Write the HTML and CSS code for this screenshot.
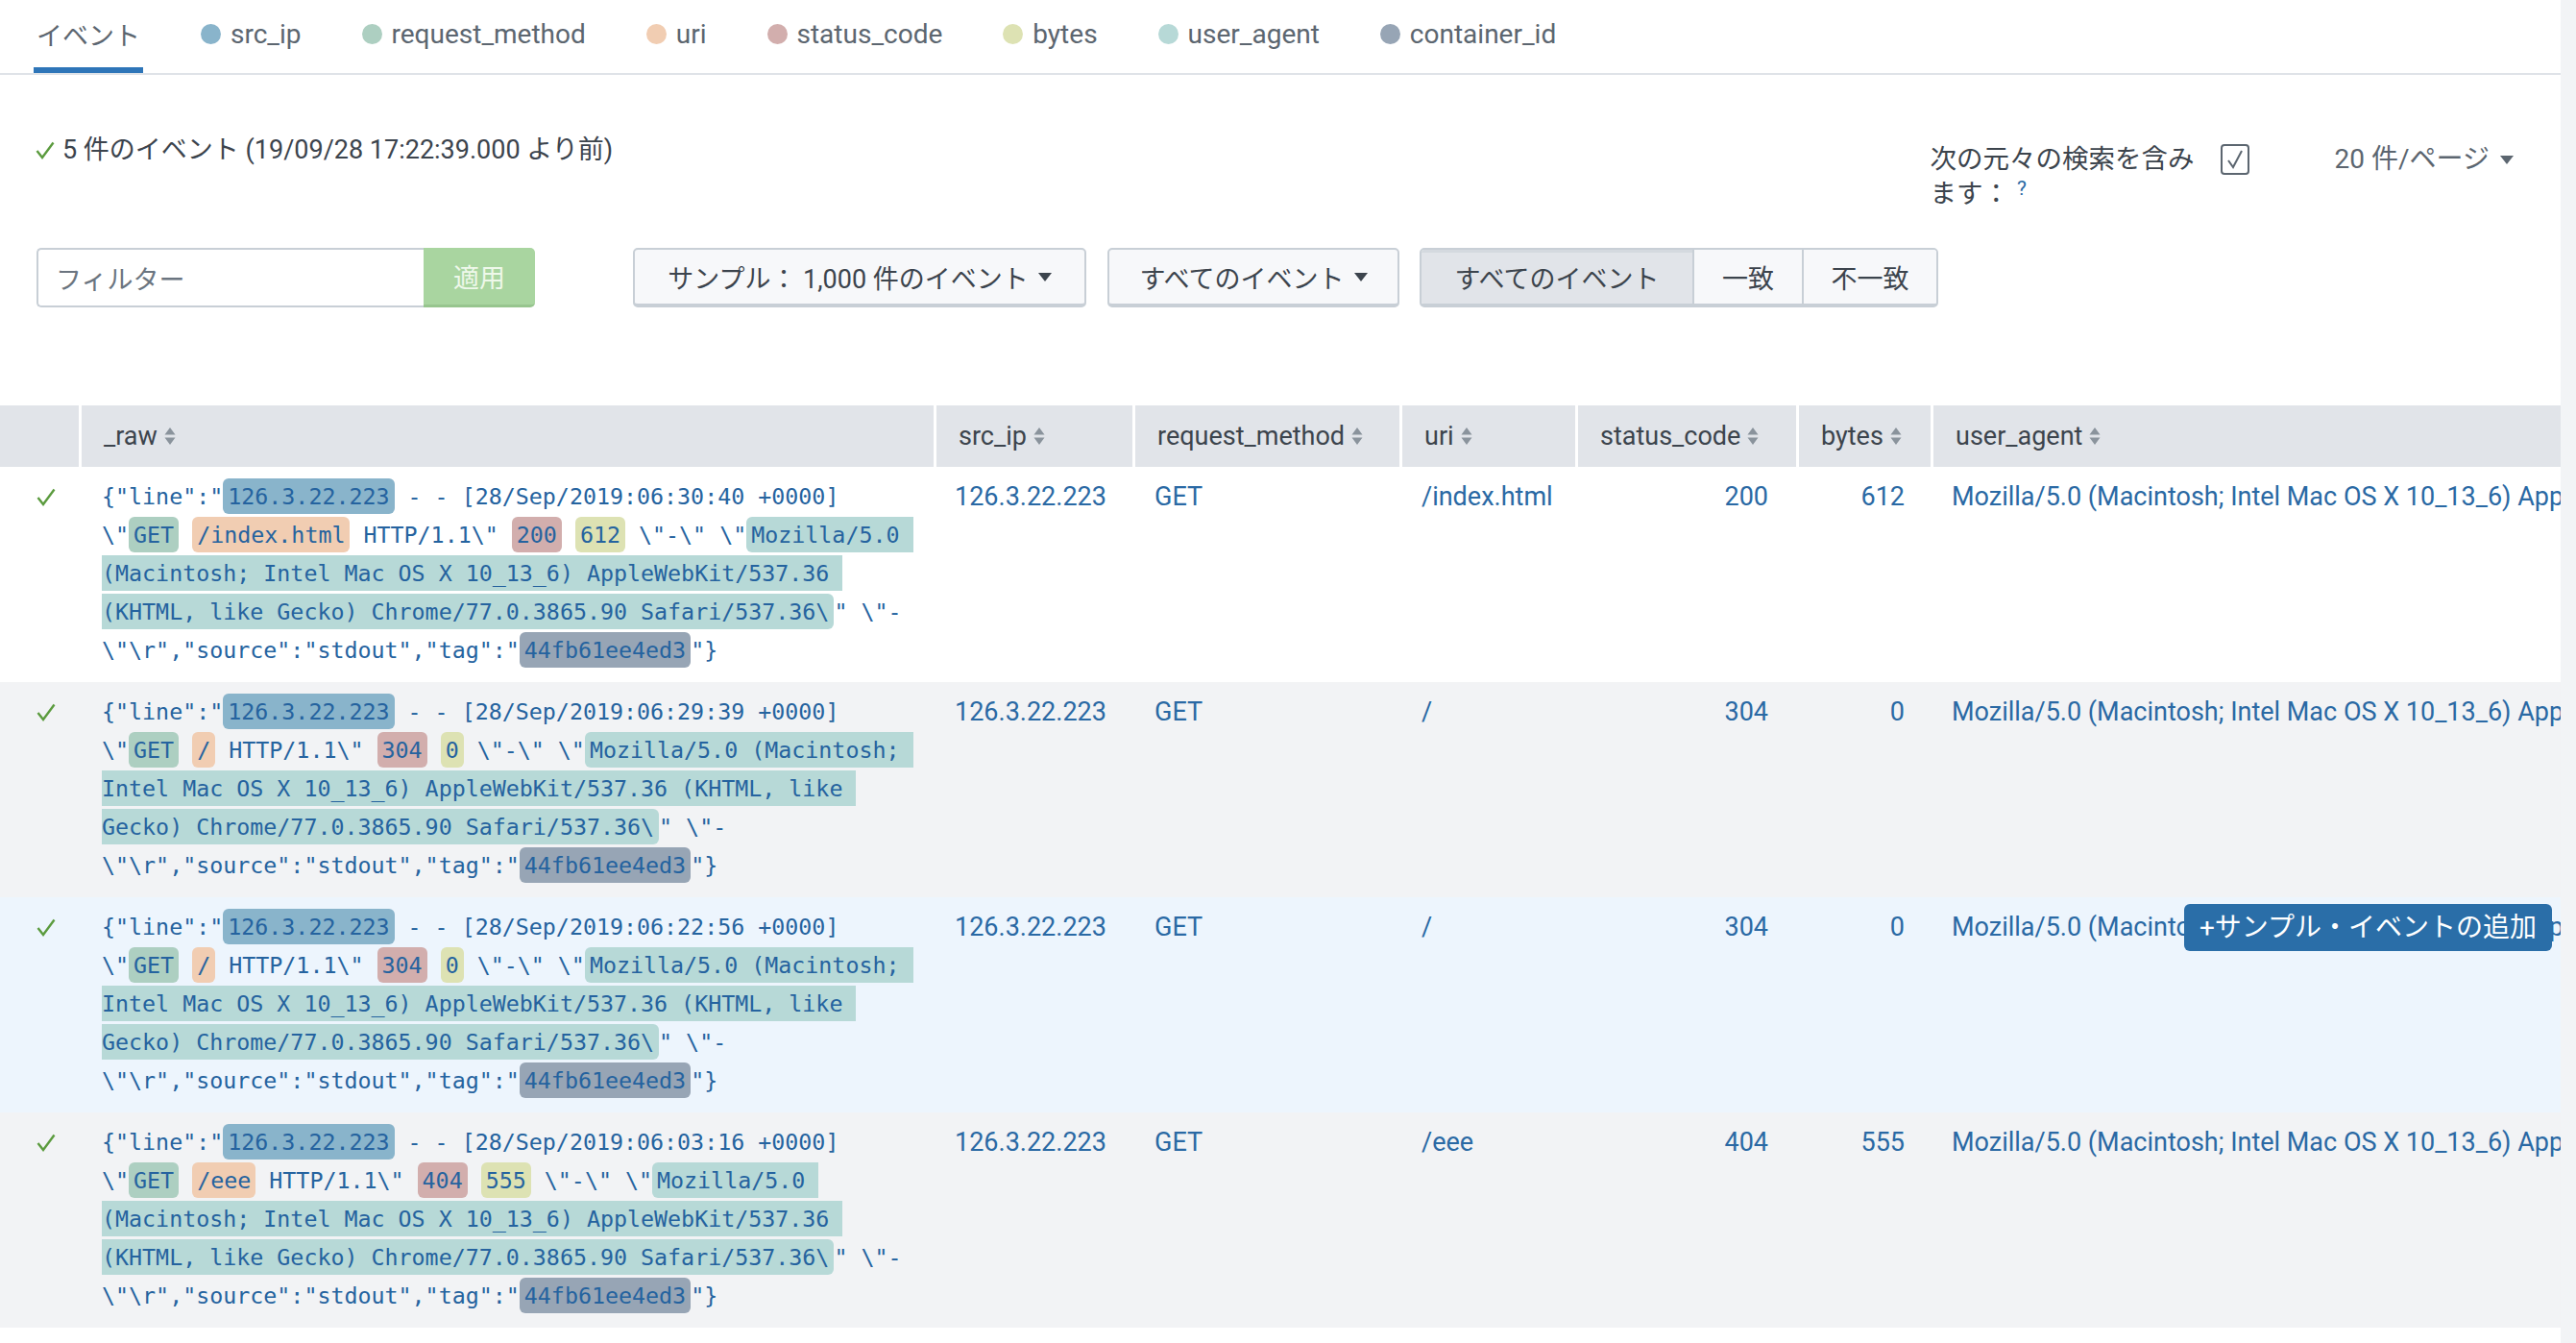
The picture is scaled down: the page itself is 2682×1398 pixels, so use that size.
FILE: index.html
```html
<!DOCTYPE html>
<html lang="ja">
<head>
<meta charset="utf-8">
<title>イベント</title>
<link rel="stylesheet" href="styles.css">
</head>
<body>
<div class="page">
  <nav class="tabs">
    <div class="tab active">イベント</div>
    <div class="tab"><span class="dot c-ip"></span>src_ip</div>
    <div class="tab"><span class="dot c-rm"></span>request_method</div>
    <div class="tab"><span class="dot c-uri"></span>uri</div>
    <div class="tab"><span class="dot c-sc"></span>status_code</div>
    <div class="tab"><span class="dot c-by"></span>bytes</div>
    <div class="tab"><span class="dot c-ua"></span>user_agent</div>
    <div class="tab"><span class="dot c-ci"></span>container_id</div>
  </nav>

  <div class="summary-row">
    <div class="summary">
      <svg class="ok" viewBox="0 0 20 19" width="20" height="19"><polyline points="1.5,10 7,17 18.5,1.5" fill="none" stroke="#5b9b3e" stroke-width="2.4"/></svg>
      <span>5 件のイベント (19/09/28 17:22:39.000 より前)</span>
    </div>
    <div class="options">
      <div class="include">
        <div class="include-label">次の元々の検索を含みます：<span class="help">?</span></div>
        <span class="checkbox"><svg viewBox="0 0 26 28" width="26" height="28"><polyline points="6,15 11,22 20,5" fill="none" stroke="#5c6670" stroke-width="2"/></svg></span>
      </div>
      <div class="perpage">20 件/ページ<svg class="caret" viewBox="0 0 14 9" width="14" height="9"><path d="M0 0H14L7 9Z" fill="#5c6670"/></svg></div>
    </div>
  </div>

  <div class="filter-row">
    <div class="filter-input">フィルター</div>
    <div class="apply">適用</div>
    <div class="btn btn-sample">サンプル： 1,000 件のイベント<svg class="caret" viewBox="0 0 14 9" width="14" height="9"><path d="M0 0H14L7 9Z" fill="#3c444d"/></svg></div>
    <div class="btn btn-all">すべてのイベント<svg class="caret" viewBox="0 0 14 9" width="14" height="9"><path d="M0 0H14L7 9Z" fill="#3c444d"/></svg></div>
    <div class="seg-group">
      <div class="seg seg-all active">すべてのイベント</div>
      <div class="seg seg-match">一致</div>
      <div class="seg seg-nomatch">不一致</div>
    </div>
  </div>

  <div class="table">
    <div class="thead">
      <div class="th"></div>
      <div class="th">_raw<svg class="sort" viewBox="0 0 12 20" width="12" height="20"><path d="M6 1L11.5 8.5H0.5Z M6 19L11.5 11.5H0.5Z" fill="#8a939c"/></svg></div>
      <div class="th">src_ip<svg class="sort" viewBox="0 0 12 20" width="12" height="20"><path d="M6 1L11.5 8.5H0.5Z M6 19L11.5 11.5H0.5Z" fill="#8a939c"/></svg></div>
      <div class="th">request_method<svg class="sort" viewBox="0 0 12 20" width="12" height="20"><path d="M6 1L11.5 8.5H0.5Z M6 19L11.5 11.5H0.5Z" fill="#8a939c"/></svg></div>
      <div class="th">uri<svg class="sort" viewBox="0 0 12 20" width="12" height="20"><path d="M6 1L11.5 8.5H0.5Z M6 19L11.5 11.5H0.5Z" fill="#8a939c"/></svg></div>
      <div class="th">status_code<svg class="sort" viewBox="0 0 12 20" width="12" height="20"><path d="M6 1L11.5 8.5H0.5Z M6 19L11.5 11.5H0.5Z" fill="#8a939c"/></svg></div>
      <div class="th">bytes<svg class="sort" viewBox="0 0 12 20" width="12" height="20"><path d="M6 1L11.5 8.5H0.5Z M6 19L11.5 11.5H0.5Z" fill="#8a939c"/></svg></div>
      <div class="th">user_agent<svg class="sort" viewBox="0 0 12 20" width="12" height="20"><path d="M6 1L11.5 8.5H0.5Z M6 19L11.5 11.5H0.5Z" fill="#8a939c"/></svg></div>
    </div>

    <div class="trow">
      <div class="td-check"><svg class="ok" viewBox="0 0 20 19" width="20" height="19"><polyline points="1.5,10 7,17 18.5,1.5" fill="none" stroke="#5b9b3e" stroke-width="2.4"/></svg></div>
      <div class="raw">{"line":"<span class="hl c-ip">126.3.22.223</span> - - [28/Sep/2019:06:30:40 +0000]<br>\"<span class="hl c-rm">GET</span> <span class="hl c-uri">/index.html</span> HTTP/1.1\" <span class="hl c-sc">200</span> <span class="hl c-by">612</span> \"-\" \"<span class="hl c-ua">Mozilla/5.0 <br>(Macintosh; Intel Mac OS X 10_13_6) AppleWebKit/537.36 <br>(KHTML, like Gecko) Chrome/77.0.3865.90 Safari/537.36\</span>" \"-<br>\"\r","source":"stdout","tag":"<span class="hl c-ci">44fb61ee4ed3</span>"}</div>
      <div class="val v-ip">126.3.22.223</div>
      <div class="val v-rm">GET</div>
      <div class="val v-uri">/index.html</div>
      <div class="val v-sc">200</div>
      <div class="val v-by">612</div>
      <div class="val v-ua">Mozilla/5.0 (Macintosh; Intel Mac OS X 10_13_6) AppleWebKit/537.36 (KHTML, like Gecko) Chrome/77.0.3865.90 Safari/537.36</div>
    </div>

    <div class="trow even">
      <div class="td-check"><svg class="ok" viewBox="0 0 20 19" width="20" height="19"><polyline points="1.5,10 7,17 18.5,1.5" fill="none" stroke="#5b9b3e" stroke-width="2.4"/></svg></div>
      <div class="raw">{"line":"<span class="hl c-ip">126.3.22.223</span> - - [28/Sep/2019:06:29:39 +0000]<br>\"<span class="hl c-rm">GET</span> <span class="hl c-uri">/</span> HTTP/1.1\" <span class="hl c-sc">304</span> <span class="hl c-by">0</span> \"-\" \"<span class="hl c-ua">Mozilla/5.0 (Macintosh; <br>Intel Mac OS X 10_13_6) AppleWebKit/537.36 (KHTML, like <br>Gecko) Chrome/77.0.3865.90 Safari/537.36\</span>" \"-<br>\"\r","source":"stdout","tag":"<span class="hl c-ci">44fb61ee4ed3</span>"}</div>
      <div class="val v-ip">126.3.22.223</div>
      <div class="val v-rm">GET</div>
      <div class="val v-uri">/</div>
      <div class="val v-sc">304</div>
      <div class="val v-by">0</div>
      <div class="val v-ua">Mozilla/5.0 (Macintosh; Intel Mac OS X 10_13_6) AppleWebKit/537.36 (KHTML, like Gecko) Chrome/77.0.3865.90 Safari/537.36</div>
    </div>

    <div class="trow hover">
      <div class="td-check"><svg class="ok" viewBox="0 0 20 19" width="20" height="19"><polyline points="1.5,10 7,17 18.5,1.5" fill="none" stroke="#5b9b3e" stroke-width="2.4"/></svg></div>
      <div class="raw">{"line":"<span class="hl c-ip">126.3.22.223</span> - - [28/Sep/2019:06:22:56 +0000]<br>\"<span class="hl c-rm">GET</span> <span class="hl c-uri">/</span> HTTP/1.1\" <span class="hl c-sc">304</span> <span class="hl c-by">0</span> \"-\" \"<span class="hl c-ua">Mozilla/5.0 (Macintosh; <br>Intel Mac OS X 10_13_6) AppleWebKit/537.36 (KHTML, like <br>Gecko) Chrome/77.0.3865.90 Safari/537.36\</span>" \"-<br>\"\r","source":"stdout","tag":"<span class="hl c-ci">44fb61ee4ed3</span>"}</div>
      <div class="val v-ip">126.3.22.223</div>
      <div class="val v-rm">GET</div>
      <div class="val v-uri">/</div>
      <div class="val v-sc">304</div>
      <div class="val v-by">0</div>
      <div class="val v-ua">Mozilla/5.0 (Macintosh; Intel Mac OS X 10_13_6) AppleWebKit/537.36 (KHTML, like Gecko) Chrome/77.0.3865.90 Safari/537.36</div>
      <div class="add-sample">+サンプル・イベントの追加</div>
    </div>

    <div class="trow even">
      <div class="td-check"><svg class="ok" viewBox="0 0 20 19" width="20" height="19"><polyline points="1.5,10 7,17 18.5,1.5" fill="none" stroke="#5b9b3e" stroke-width="2.4"/></svg></div>
      <div class="raw">{"line":"<span class="hl c-ip">126.3.22.223</span> - - [28/Sep/2019:06:03:16 +0000]<br>\"<span class="hl c-rm">GET</span> <span class="hl c-uri">/eee</span> HTTP/1.1\" <span class="hl c-sc">404</span> <span class="hl c-by">555</span> \"-\" \"<span class="hl c-ua">Mozilla/5.0 <br>(Macintosh; Intel Mac OS X 10_13_6) AppleWebKit/537.36 <br>(KHTML, like Gecko) Chrome/77.0.3865.90 Safari/537.36\</span>" \"-<br>\"\r","source":"stdout","tag":"<span class="hl c-ci">44fb61ee4ed3</span>"}</div>
      <div class="val v-ip">126.3.22.223</div>
      <div class="val v-rm">GET</div>
      <div class="val v-uri">/eee</div>
      <div class="val v-sc">404</div>
      <div class="val v-by">555</div>
      <div class="val v-ua">Mozilla/5.0 (Macintosh; Intel Mac OS X 10_13_6) AppleWebKit/537.36 (KHTML, like Gecko) Chrome/77.0.3865.90 Safari/537.36</div>
    </div>
  </div>
</div>
<div class="scrolltrack"></div>
</body>
</html>
```

FILE: styles.css
```css
* { box-sizing: border-box; }
html, body { margin: 0; padding: 0; }
body {
  display: flex;
  min-height: 100vh;
  background: #fff;
  font-family: Roboto, "Noto Sans CJK JP", sans-serif;
  font-size: 27px;
  color: #3c444d;
}
.page { flex: 1; min-width: 0; }
.scrolltrack { flex: none; width: 16px; background: #f2f4f6; }

/* colour keys */
.c-ip { background: #89b4cb; }
.c-rm { background: #adcfc1; }
.c-uri { background: #f1cdb2; }
.c-sc { background: #d2aead; }
.c-by { background: #dde2b3; }
.c-ua { background: #b7d9d7; }
.c-ci { background: #97a5b5; }

/* tabs */
.tabs {
  display: flex;
  gap: 57px;
  height: 78px;
  padding-left: 35px;
  border-bottom: 2px solid #dfe3e8;
  font-size: 28px;
}
.tab {
  display: flex;
  align-items: center;
  height: 76px;
  padding: 0 3px;
  border-bottom: 6px solid transparent;
  color: #5c6670;
}
.tab.active { border-bottom-color: #2e75b8; font-size: 27px; }
.dot {
  width: 21px;
  height: 21px;
  border-radius: 50%;
  margin-right: 10px;
}

/* summary */
.summary-row {
  display: flex;
  justify-content: space-between;
  align-items: flex-start;
  height: 180px;
  padding: 60px 49px 0 37px;
}
.summary {
  display: flex;
  align-items: center;
  gap: 8px;
  line-height: 36px;
}
.options {
  display: flex;
  align-items: flex-start;
  margin-top: 10px;
}
.include { display: flex; align-items: flex-start; gap: 20px; }
.include-label { width: 282px; line-height: 36px; font-size: 27.5px; }
.help {
  font-size: 21px;
  color: #2a69a4;
  margin-left: 8px;
  vertical-align: 8px;
  line-height: 1;
}
.checkbox {
  display: flex;
  align-items: center;
  justify-content: center;
  width: 30px;
  height: 32px;
  margin-top: 2px;
  border: 2px solid #5c6670;
  border-radius: 4px;
}
.perpage {
  display: flex;
  align-items: center;
  gap: 11px;
  margin-left: 89px;
  line-height: 36px;
  font-size: 28px;
  color: #5c6670;
}

/* filter row */
.filter-row {
  display: flex;
  height: 62px;
  padding-left: 38px;
}
.filter-input {
  display: flex;
  align-items: center;
  width: 403px;
  padding-left: 18px;
  border: 2px solid #c8cfd6;
  border-right: 0;
  border-radius: 5px 0 0 5px;
  color: #6b7580;
  background: #fff;
}
.apply {
  display: flex;
  align-items: center;
  justify-content: center;
  width: 116px;
  background: #a9d5a0;
  border-bottom: 3px solid #97c58e;
  border-radius: 0 5px 5px 0;
  color: #eef8ea;
}
.btn {
  display: flex;
  align-items: center;
  justify-content: center;
  gap: 10px;
  background: #f7f8fa;
  border: 2px solid #c8cfd6;
  border-bottom-width: 4px;
  border-radius: 5px;
  color: #3c444d;
}
.btn-sample { width: 472px; margin-left: 102px; }
.btn-all { width: 304px; margin-left: 22px; }
.seg-group {
  display: flex;
  margin-left: 21px;
  border: 2px solid #c8cfd6;
  border-bottom-width: 4px;
  border-radius: 5px;
  overflow: hidden;
}
.seg {
  display: flex;
  align-items: center;
  justify-content: center;
  background: #f7f8fa;
  color: #3c444d;
}
.seg + .seg { border-left: 2px solid #c8cfd6; }
.seg.active { background: #e1e4e9; box-shadow: inset 0 3px 0 #d4d9df; }
.seg-all { width: 282px; }
.seg-match { width: 114px; }
.seg-nomatch { width: 140px; }

/* table */
.table { margin-top: 102px; }
.thead, .trow {
  display: grid;
  grid-template-columns: 82px 890px 207px 278px 183px 230px 140px minmax(0, 1fr);
}
.thead { height: 64px; background: #e1e4e9; }
.th {
  display: flex;
  align-items: center;
  padding-left: 23px;
  border-left: 3px solid #fff;
  color: #3c444d;
  white-space: nowrap;
}
.th:first-child { border-left: 0; }
.sort { margin-left: 7px; flex: none; }

.trow {
  position: relative;
  padding: 11px 0 13px;
  line-height: 40px;
  background: #fff;
}
.trow.even { background: #f2f3f5; }
.trow.hover { background: #edf5fd; }

.td-check { padding-left: 38px; }
.td-check .ok { display: block; margin-top: 11px; }

.raw {
  padding-left: 24px;
  font-family: "DejaVu Sans Mono", monospace;
  font-size: 23.3px;
  line-height: 40px;
  white-space: pre;
  color: #25639f;
}
.hl {
  padding: 5px 5px;
  border-radius: 6px;
}

.val {
  color: #2a69a4;
  white-space: nowrap;
  overflow: hidden;
}
.v-ip { padding-left: 22px; }
.v-rm { padding-left: 23px; }
.v-uri { padding-left: 23px; }
.v-sc { text-align: right; padding-right: 29px; }
.v-by { text-align: right; padding-right: 27px; }
.v-ua { padding-left: 22px; }

.add-sample {
  position: absolute;
  top: 7px;
  right: 9px;
  height: 49px;
  padding: 0 16px;
  display: flex;
  align-items: center;
  background: #2a6ea8;
  color: #fff;
  border-radius: 6px;
  font-size: 28px;
  line-height: 1;
}
```
